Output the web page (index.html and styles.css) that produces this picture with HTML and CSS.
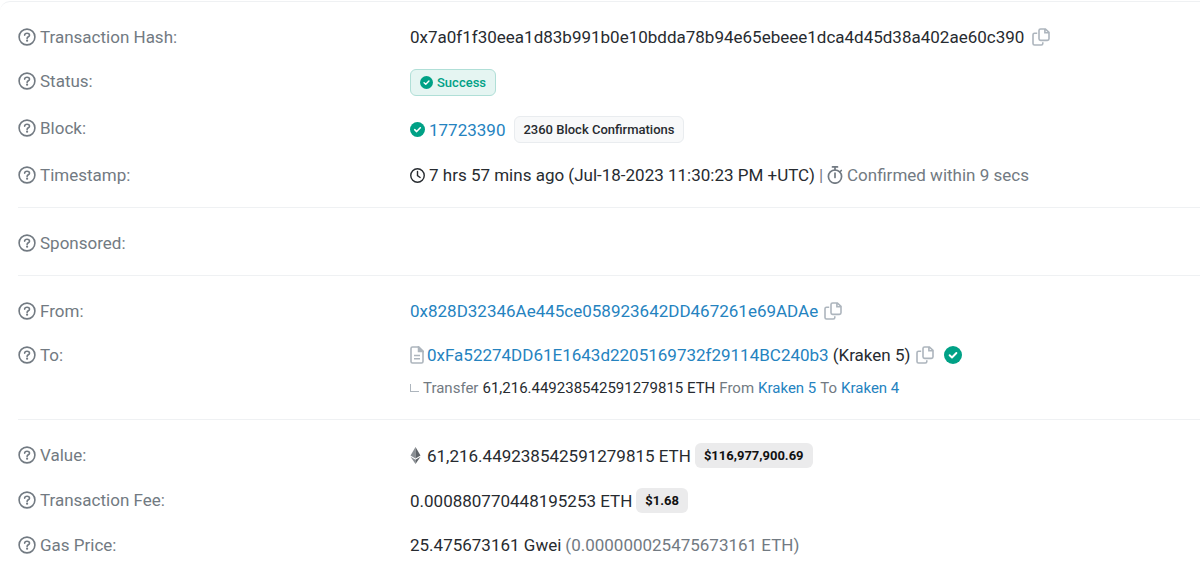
FILE: index.html
```
<!DOCTYPE html>
<html lang="en">
<head>
    <meta charset="UTF-8" />
    <meta name="viewport" content="width=device-width, initial-scale=1.0" />
    <title>Transaction Details</title>
    <link rel="stylesheet" href="styles.css">
</head>
<body>
    <!-- Shared icons -->
    <svg class="sprite" aria-hidden="true">
        <symbol id="icon-help" viewBox="0 0 18 18">
            <circle cx="9" cy="9" r="7.9" fill="none" stroke="currentColor" stroke-width="1.6"/>
            <path d="M6.6 7.1C6.7 5.9 7.6 5.3 9 5.3s2.5.7 2.5 1.9c0 1.6-2.4 1.5-2.4 3.2" fill="none" stroke="currentColor" stroke-width="1.6" stroke-linecap="round"/>
            <circle cx="9.1" cy="12.7" r="1.1" fill="currentColor"/>
        </symbol>
        <symbol id="icon-copy" viewBox="0 0 18 18">
            <path d="M8.6 1h4.8L17 4.4v6.4a1.6 1.6 0 0 1-1.6 1.6H8.6A1.6 1.6 0 0 1 7 10.8V2.6A1.6 1.6 0 0 1 8.600 1zM12.900 1.200v3.500h3.800M5.200 5.200H2.500A1.500 1.500 0 0 0 1 6.700v8.800A1.500 1.500 0 0 0 2.500 17h6.800a1.500 1.500 0 0 0 1.500-1.500v-1.200" fill="none" stroke="currentColor" stroke-width="1.6"/>
        </symbol>
        <symbol id="icon-check" viewBox="0 0 16 16">
            <circle cx="8" cy="8" r="8" fill="currentColor"/>
            <path d="M5 8.200l2.100 2 3.900-4" fill="none" stroke="#fff" stroke-width="1.700" stroke-linecap="round" stroke-linejoin="round"/>
        </symbol>
        <symbol id="icon-clock" viewBox="0 0 16 16">
            <circle cx="8" cy="8" r="7.200" fill="none" stroke="currentColor" stroke-width="1.500"/>
            <path d="M8 3.800V8.200l2.800 1.900" fill="none" stroke="currentColor" stroke-width="1.500" stroke-linecap="round"/>
        </symbol>
        <symbol id="icon-stopwatch" viewBox="0 0 16 18">
            <circle cx="8" cy="10.600" r="6.600" fill="none" stroke="currentColor" stroke-width="1.700"/>
            <path d="M5.500.9h5M8 1v3M8 7.200v4.200M12.800 6l1.500-1.500" fill="none" stroke="currentColor" stroke-width="1.700" stroke-linecap="round"/>
        </symbol>
        <symbol id="icon-file" viewBox="0 0 14 18">
            <path d="M2.500 1h6.300L13 5.200v10.300a1.500 1.500 0 0 1-1.500 1.500h-9A1.500 1.500 0 0 1 1 15.500v-13A1.500 1.500 0 0 1 2.500 1z" fill="none" stroke="currentColor" stroke-width="1.600"/>
            <path d="M8.500 1v4.500H13zM4 9.500h6M4 12.700h6" fill="currentColor" stroke="currentColor" stroke-width="1.500"/>
        </symbol>
        <symbol id="icon-eth" viewBox="0 0 10 17">
            <path d="M5 0L0 8.600l5 3z" fill="#8a8f94"/>
            <path d="M5 0l5 8.600-5 3z" fill="#5f6469"/>
            <path d="M0 9.800L5 17v-4.200z" fill="#8a8f94"/>
            <path d="M10 9.800L5 17v-4.200z" fill="#5f6469"/>
        </symbol>
    </svg>

    <main class="card">
        <dl class="group">
            <div class="row">
                <dt><svg class="icon help"><use href="#icon-help"/></svg>Transaction Hash:</dt>
                <dd>
                    <span>0x7a0f1f30eea1d83b991b0e10bdda78b94e65ebeee1dca4d45d38a402ae60c390</span>
                    <button class="copy spaced" type="button" aria-label="Copy transaction hash"><svg class="icon"><use href="#icon-copy"/></svg></button>
                </dd>
            </div>
            <div class="row">
                <dt><svg class="icon help"><use href="#icon-help"/></svg>Status:</dt>
                <dd><span class="badge badge-success"><svg class="icon check-small"><use href="#icon-check"/></svg>Success</span></dd>
            </div>
            <div class="row">
                <dt><svg class="icon help"><use href="#icon-help"/></svg>Block:</dt>
                <dd>
                    <svg class="icon check"><use href="#icon-check"/></svg>
                    <a href="#block">17723390</a>
                    <span class="badge badge-outline">2360 Block Confirmations</span>
                </dd>
            </div>
            <div class="row">
                <dt><svg class="icon help"><use href="#icon-help"/></svg>Timestamp:</dt>
                <dd>
                    <svg class="icon clock"><use href="#icon-clock"/></svg>
                    <span>7 hrs 57 mins ago (Jul-18-2023 11:30:23 PM +UTC)</span>
                    <span class="muted">|</span>
                    <svg class="icon stopwatch"><use href="#icon-stopwatch"/></svg>
                    <span class="muted">Confirmed within 9 secs</span>
                </dd>
            </div>
        </dl>

        <dl class="group">
            <div class="row">
                <dt><svg class="icon help"><use href="#icon-help"/></svg>Sponsored:</dt>
                <dd></dd>
            </div>
        </dl>

        <dl class="group">
            <div class="row">
                <dt><svg class="icon help"><use href="#icon-help"/></svg>From:</dt>
                <dd>
                    <a href="#from">0x828D32346Ae445ce058923642DD467261e69ADAe</a>
                    <button class="copy" type="button" aria-label="Copy sender address"><svg class="icon"><use href="#icon-copy"/></svg></button>
                </dd>
            </div>
            <div class="row">
                <dt><svg class="icon help"><use href="#icon-help"/></svg>To:</dt>
                <dd>
                    <svg class="icon file"><use href="#icon-file"/></svg>
                    <a href="#to">0xFa52274DD61E1643d2205169732f29114BC240b3</a>
                    <span>(Kraken 5)</span>
                    <button class="copy" type="button" aria-label="Copy recipient address"><svg class="icon"><use href="#icon-copy"/></svg></button>
                    <svg class="icon check-large"><use href="#icon-check"/></svg>
                </dd>
                <dd class="transfer">
                    <span class="branch"></span>
                    <span class="muted">Transfer</span>
                    <span>61,216.449238542591279815 ETH</span>
                    <span class="muted">From</span>
                    <a href="#kraken5">Kraken 5</a>
                    <span class="muted">To</span>
                    <a href="#kraken4">Kraken 4</a>
                </dd>
            </div>
        </dl>

        <dl class="group">
            <div class="row">
                <dt><svg class="icon help"><use href="#icon-help"/></svg>Value:</dt>
                <dd>
                    <svg class="icon eth"><use href="#icon-eth"/></svg>
                    <span>61,216.449238542591279815 ETH</span>
                    <span class="badge badge-price">$116,977,900.69</span>
                </dd>
            </div>
            <div class="row">
                <dt><svg class="icon help"><use href="#icon-help"/></svg>Transaction Fee:</dt>
                <dd>
                    <span>0.000880770448195253 ETH</span>
                    <span class="badge badge-price">$1.68</span>
                </dd>
            </div>
            <div class="row">
                <dt><svg class="icon help"><use href="#icon-help"/></svg>Gas Price:</dt>
                <dd>
                    <span>25.475673161 Gwei</span>
                    <span class="muted">(0.000000025475673161 ETH)</span>
                </dd>
            </div>
        </dl>
    </main>
</body>
</html>
```
FILE: styles.css
```
:root {
    --text-primary: #272b30;
    --text-secondary: #727a82;
    --link: #2583bf;
    --success: #00a186;
    --border-color: #eff1f3;
    --icon-light: #adb5bd;
}

* {
    margin: 0;
    padding: 0;
    box-sizing: border-box;
}

body {
    font-family: Roboto, 'Liberation Sans', sans-serif;
    font-size: 17px;
    line-height: 24px;
    color: var(--text-primary);
    background: #fff;
    padding-top: 1px;
}

a {
    color: var(--link);
    text-decoration: none;
}

.sprite {
    display: none;
}

.card {
    border-top: 1px solid var(--border-color);
    border-top-left-radius: 10px;
    padding-left: 18px;
}

.group {
    display: flex;
    flex-direction: column;
    gap: 20px;
    padding: 23px 0 20px;
}

.group + .group {
    border-top: 1px solid var(--border-color);
}

.row {
    display: grid;
    grid-template-columns: 392px 1fr;
    row-gap: 10px;
}

dt {
    display: flex;
    align-items: center;
    align-self: start;
    gap: 4px;
    color: var(--text-secondary);
}

dd {
    display: flex;
    align-items: center;
    gap: 4px;
    white-space: nowrap;
}

.muted {
    color: var(--text-secondary);
}

.icon {
    display: block;
    flex: none;
    width: 18px;
    height: 18px;
}

.check,
.clock {
    width: 15px;
    height: 15px;
}

.check,
.check-large {
    color: var(--success);
}

.check-large {
    margin-left: 6px;
}

.check-small {
    width: 13px;
    height: 13px;
}

.stopwatch {
    width: 16px;
    color: var(--text-secondary);
}

.file {
    width: 14px;
    color: var(--icon-light);
    margin-right: -1px;
}

.eth {
    width: 11px;
    height: 17px;
    margin-right: 2px;
}

.copy {
    background: none;
    border: none;
    color: var(--icon-light);
    cursor: pointer;
    margin-left: 2px;
}

.spaced {
    margin-left: 4px;
}

.badge {
    display: inline-flex;
    align-items: center;
    gap: 4px;
    border-radius: 6px;
    padding: 0 9px;
    font-size: 13px;
    font-weight: 500;
    line-height: 25px;
}

.badge-success {
    color: var(--success);
    background: #e5f5f2;
    border: 1px solid #b0dfd7;
}

.badge-outline {
    background: #f8f9fa;
    border: 1px solid #e9ecef;
    margin-left: 5px;
    padding: 0 8px;
}

.badge-price {
    background: #ebebec;
    color: #111;
    font-weight: 700;
}

.transfer {
    grid-column: 2;
    font-size: 15px;
    line-height: 22px;
}

/* corner line leading to the internal transfer */
.branch {
    width: 9px;
    height: 8px;
    border-left: 1px solid var(--icon-light);
    border-bottom: 1px solid var(--icon-light);
}
```
